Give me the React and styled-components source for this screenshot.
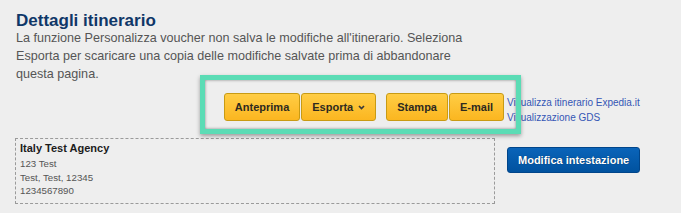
import styled, { createGlobalStyle } from "styled-components";

const GlobalStyle = createGlobalStyle`
    body {
        margin: 0;
        background: #eeeeee;
        font-family: "Liberation Sans", Arial, sans-serif;
    }
`;

function Chevron() {
    return (
        <svg width="7" height="5" viewBox="0 0 7 5" aria-hidden="true">
            <path
                d="M1 1L3.5 3.5L6 1"
                fill="none"
                stroke="#3a3a3a"
                strokeWidth="1.7"
            />
        </svg>
    );
}

function App() {
    return (
        <S_Page>
            <GlobalStyle />
            <S_Title>Dettagli itinerario</S_Title>
            <S_Intro>
                La funzione Personalizza voucher non salva le modifiche
                all'itinerario. Seleziona Esporta per scaricare una copia delle
                modifiche salvate prima di abbandonare questa pagina.
            </S_Intro>
            <S_Layout>
                <S_Toolbar>
                    <S_Group>
                        <S_YellowButton>Anteprima</S_YellowButton>
                        <S_YellowButton>
                            Esporta <Chevron />
                        </S_YellowButton>
                    </S_Group>
                    <S_Group>
                        <S_YellowButton>Stampa</S_YellowButton>
                        <S_YellowButton>E-mail</S_YellowButton>
                    </S_Group>
                </S_Toolbar>
                <S_Links>
                    <S_Link href="#">Visualizza itinerario Expedia.it</S_Link>
                    <S_Link href="#">Visualizzazione GDS</S_Link>
                </S_Links>
                <S_AgencyBox>
                    <S_AgencyName>Italy Test Agency</S_AgencyName>
                    <S_AgencyLine>123 Test</S_AgencyLine>
                    <S_AgencyLine>Test, Test, 12345</S_AgencyLine>
                    <S_AgencyLine>1234567890</S_AgencyLine>
                </S_AgencyBox>
                <S_Side>
                    <S_BlueButton>Modifica intestazione</S_BlueButton>
                </S_Side>
            </S_Layout>
            <S_Highlight />
        </S_Page>
    );
}

const S_Page = styled.main`
    position: relative;
    padding: 13px 16px 0;
`;

const S_Title = styled.h1`
    margin: 0;
    font-size: 17px;
    line-height: 16px;
    font-weight: bold;
    color: #0f3768;
`;

const S_Intro = styled.p`
    margin: 0;
    max-width: 470px;
    font-size: 12.6px;
    line-height: 18px;
    color: #555555;
`;

const S_Layout = styled.div`
    display: grid;
    grid-template-columns: 491px auto;
    row-gap: 13px;
    margin-top: 10px;
`;

const S_Toolbar = styled.div`
    display: flex;
    justify-content: flex-end;
    gap: 10px;
    padding-right: 3px;
`;

const S_Group = styled.div`
    display: flex;
    gap: 1px;
`;

const S_YellowButton = styled.button`
    display: flex;
    align-items: center;
    gap: 5px;
    height: 28px;
    padding: 0 10px;
    border: 1px solid #c89b14;
    border-radius: 3px;
    background: linear-gradient(#ffcd45, #fbb620);
    font-family: inherit;
    font-size: 11px;
    font-weight: bold;
    color: #2e2a20;
`;

const S_Links = styled.div`
    display: flex;
    flex-direction: column;
    margin-top: 3px;
`;

const S_Link = styled.a`
    font-size: 10px;
    line-height: 14.5px;
    color: #3556b5;
    text-decoration: none;
`;

const S_AgencyBox = styled.div`
    margin-left: -1px;
    width: 480px;
    box-sizing: border-box;
    padding: 3px 4px 6px;
    border: 1px dashed #9a9a9a;
`;

const S_AgencyName = styled.div`
    margin-bottom: 2px;
    font-size: 11px;
    line-height: 13.3px;
    font-weight: bold;
    color: #1c1c1c;
`;

const S_AgencyLine = styled.div`
    font-size: 9.7px;
    line-height: 13.3px;
    color: #555555;
`;

const S_Side = styled.div`
    padding-top: 9px;
`;

const S_BlueButton = styled.button`
    height: 26px;
    padding: 0 10px;
    border: 1px solid #00458a;
    border-radius: 3px;
    background: linear-gradient(#0a64b9, #00529f);
    font-family: inherit;
    font-size: 11px;
    font-weight: bold;
    color: #ffffff;
    text-shadow: 0 0 1px rgba(0, 0, 0, 0.5);
`;

// annotation frame drawn over the toolbar
const S_Highlight = styled.div`
    position: absolute;
    left: 200px;
    top: 75px;
    width: 321px;
    height: 59px;
    box-sizing: border-box;
    border: 5px solid #5bdcb5;
    box-shadow: 0 2px 4px rgba(0, 0, 0, 0.35),
        inset 0 0 3px rgba(0, 0, 0, 0.45);
    pointer-events: none;
`;

export default App;
